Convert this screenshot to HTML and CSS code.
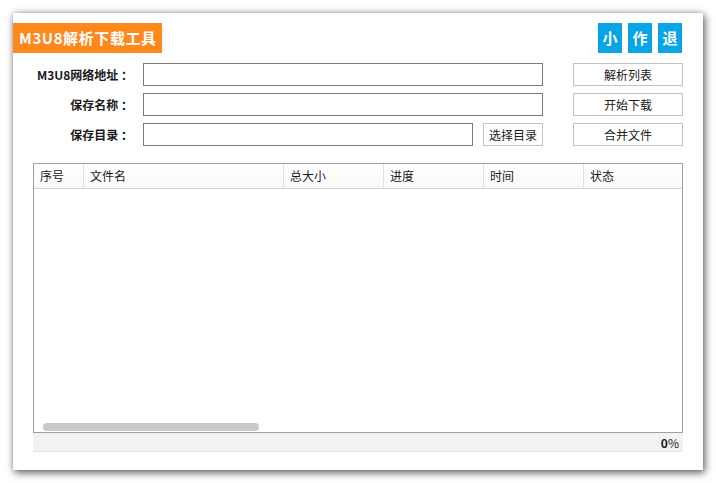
FILE: index.html
```html
<!DOCTYPE html>
<html lang="zh">
<head>
<meta charset="utf-8">
<title>M3U8解析下载工具</title>
<link rel="stylesheet" href="styles.css">
</head>
<body>
<div class="window">
  <div class="topbar">
    <div class="title">M3U8解析下载工具</div>
    <div class="sysbtns">
      <span class="sysbtn">小</span>
      <span class="sysbtn">作</span>
      <span class="sysbtn">退</span>
    </div>
  </div>
  <div class="form">
    <label class="lbl">M3U8网络地址 ：</label>
    <div class="field"><input class="inp" type="text"></div>
    <button class="btn wide">解析列表</button>

    <label class="lbl">保存名称 ：</label>
    <div class="field"><input class="inp" type="text"></div>
    <button class="btn wide">开始下载</button>

    <label class="lbl">保存目录 ：</label>
    <div class="field dir"><input class="inp" type="text"><button class="btn small">选择目录</button></div>
    <button class="btn wide">合并文件</button>
  </div>
  <div class="grid">
    <div class="thead">
      <div class="th c1">序号</div>
      <div class="th c2">文件名</div>
      <div class="th c3">总大小</div>
      <div class="th c3">进度</div>
      <div class="th c3">时间</div>
      <div class="th c3 last">状态</div>
    </div>
    <div class="tbody">
      <div class="hscroll"></div>
    </div>
  </div>
  <div class="status"><b>0</b>%</div>
</div>
</body>
</html>
```

FILE: styles.css
```css
html, body {
  margin: 0;
  padding: 0;
  background: #ffffff;
}
body {
  padding: 13px;
  font-family: "Noto Sans CJK SC", "Liberation Sans", sans-serif;
  font-size: 12px;
  color: #1a1a1a;
}
.window {
  width: 690px;
  height: 457px;
  background: #ffffff;
  box-shadow: 2px 3px 8px rgba(0,0,0,0.55), 0 0 6px rgba(0,0,0,0.25);
  box-sizing: border-box;
  padding-top: 10px;
  display: flex;
  flex-direction: column;
}
.topbar {
  display: flex;
  justify-content: space-between;
  align-items: flex-start;
  height: 30px;
  padding-right: 21px;
}
.title {
  height: 30px;
  line-height: 30px;
  background: #ff881c;
  color: #ffffff;
  font-weight: bold;
  font-size: 15px;
  padding: 0 5px 0 6px;
  letter-spacing: 0.6px;
}
.sysbtns {
  display: flex;
  gap: 6px;
}
.sysbtn {
  width: 24px;
  height: 30px;
  line-height: 30px;
  text-align: center;
  background: #08a4e8;
  color: #ffffff;
  font-weight: bold;
  font-size: 15px;
}
.form {
  display: grid;
  grid-template-columns: 97px 400px 110px;
  column-gap: 13px;
  row-gap: 7px;
  margin: 10px 0 0 20px;
}
.form .btn.wide {
  margin-left: 17px;
  width: 110px;
}
.lbl {
  font-weight: bold;
  text-align: right;
  line-height: 23px;
  height: 23px;
  white-space: nowrap;
  margin-right: -3px;
}
.field {
  display: flex;
  gap: 10px;
}
.inp {
  flex: 1;
  height: 23px;
  box-sizing: border-box;
  border: 1px solid #7a7a7a;
  margin: 0;
  padding: 0 3px;
  background: #fff;
  outline: none;
}
.btn {
  height: 23px;
  box-sizing: border-box;
  border: 1px solid #c3c3c3;
  background: #ffffff;
  font-family: "Noto Sans CJK SC", "Liberation Sans", sans-serif;
  font-size: 12px;
  color: #1a1a1a;
  padding: 0;
  margin: 0;
}
.btn.small {
  width: 60px;
  flex: none;
}
.grid {
  margin: 17px 0 0 20px;
  width: 650px;
  height: 270px;
  box-sizing: border-box;
  border: 1px solid #a0a0a0;
  display: flex;
  flex-direction: column;
}
.thead {
  display: flex;
  height: 24px;
  border-bottom: 1px solid #d5d5d5;
  background: linear-gradient(#ffffff, #f9f9f9);
}
.th {
  box-sizing: border-box;
  border-right: 1px solid #e0e0e0;
  padding-left: 6px;
  line-height: 24px;
  color: #1a1a1a;
}
.th.c1 { width: 50px; }
.th.c2 { width: 200px; }
.th.c3 { width: 100px; }
.th.last { border-right: none; width: 98px; }
.tbody {
  flex: 1;
  display: flex;
  align-items: flex-end;
  padding: 0 0 1px 9px;
}
.hscroll {
  width: 216px;
  height: 8px;
  border-radius: 4px;
  background: #c9c9c9;
}
.status {
  margin-left: 20px;
  width: 650px;
  height: 19px;
  box-sizing: border-box;
  background: #f2f2f2;
  border-bottom: 1px solid #e6e6e6;
  text-align: right;
  padding-right: 4px;
  line-height: 19px;
  font-size: 12px;
}
.status b {
  font-weight: bold;
}
```
